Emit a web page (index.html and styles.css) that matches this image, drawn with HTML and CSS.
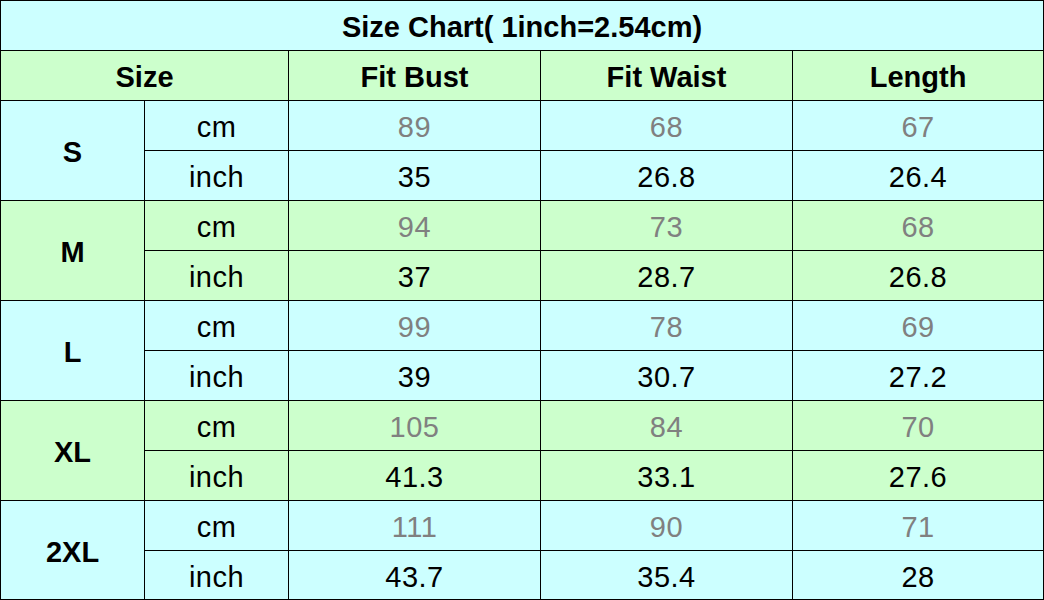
FILE: index.html
```html
<!DOCTYPE html>
<html>
<head>
<meta charset="utf-8">
<link rel="stylesheet" href="styles.css">
</head>
<body>
<table class="chart">
  <colgroup>
    <col class="c-size"><col class="c-unit"><col class="c-val"><col class="c-val"><col class="c-last">
  </colgroup>
  <tr class="cyan"><th colspan="5" class="title">Size Chart( 1inch=2.54cm)</th></tr>
  <tr class="green"><th colspan="2">Size</th><th>Fit Bust</th><th>Fit Waist</th><th>Length</th></tr>

  <tr class="cyan"><th rowspan="2">S</th><td>cm</td><td class="gray">89</td><td class="gray">68</td><td class="gray">67</td></tr>
  <tr class="cyan"><td>inch</td><td>35</td><td>26.8</td><td>26.4</td></tr>

  <tr class="green"><th rowspan="2">M</th><td>cm</td><td class="gray">94</td><td class="gray">73</td><td class="gray">68</td></tr>
  <tr class="green"><td>inch</td><td>37</td><td>28.7</td><td>26.8</td></tr>

  <tr class="cyan"><th rowspan="2">L</th><td>cm</td><td class="gray">99</td><td class="gray">78</td><td class="gray">69</td></tr>
  <tr class="cyan"><td>inch</td><td>39</td><td>30.7</td><td>27.2</td></tr>

  <tr class="green"><th rowspan="2">XL</th><td>cm</td><td class="gray">105</td><td class="gray">84</td><td class="gray">70</td></tr>
  <tr class="green"><td>inch</td><td>41.3</td><td>33.1</td><td>27.6</td></tr>

  <tr class="cyan"><th rowspan="2">2XL</th><td>cm</td><td class="gray">111</td><td class="gray">90</td><td class="gray">71</td></tr>
  <tr class="cyan last"><td>inch</td><td>43.7</td><td>35.4</td><td>28</td></tr>
</table>
</body>
</html>
```

FILE: styles.css
```css
html, body {
  margin: 0;
  padding: 0;
  background: #ffffff;
}
.chart {
  border-collapse: collapse;
  table-layout: fixed;
  width: 1043px;
  font-family: "Liberation Sans", Arial, sans-serif;
  font-size: 29px;
  color: #000;
}
.c-size { width: 144px; }
.c-unit { width: 144px; }
.c-val { width: 252px; }
.c-last { width: 251px; }
.chart th, .chart td {
  border: 1px solid #000;
  height: 46px;
  padding: 3px 0 0 0;
  text-align: center;
  vertical-align: middle;
  line-height: 28px;
}
.chart .last td {
  height: 45px;
}
.chart th {
  font-weight: bold;
}
.chart td {
  font-weight: normal;
  letter-spacing: 0.5px;
}
.cyan { background: #ccffff; }
.green { background: #ccffcc; }
.gray { color: #808080; }
```
